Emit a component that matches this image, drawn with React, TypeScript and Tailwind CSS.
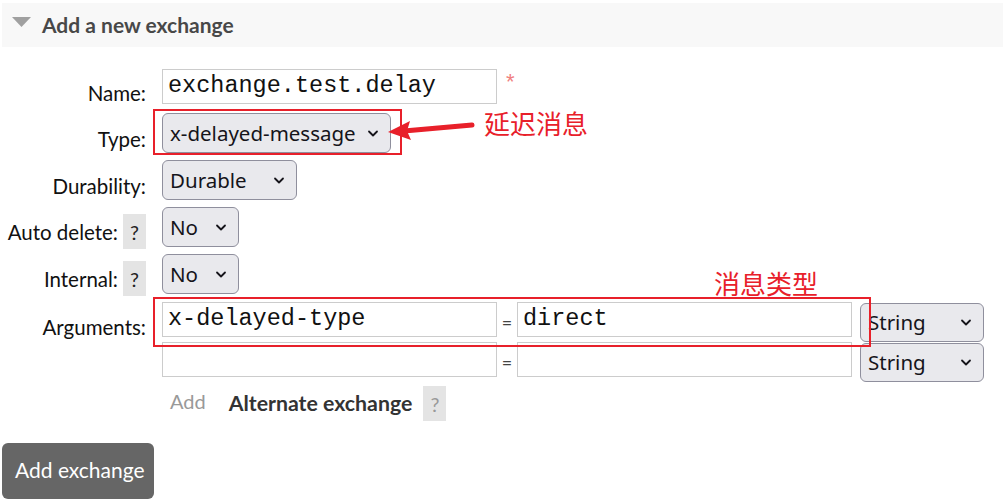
import React from "react";

const label = "font-['Lato',sans-serif] text-[20.5px] leading-[24px] text-[#111]";
const mono = "font-['Liberation_Mono',monospace] text-[23.5px] text-[#111]";
const selectFont = "font-['Noto_Sans',sans-serif] text-[20.5px] text-[#15141a]";

function Chevron() {
  return (
    <svg width="12" height="9" viewBox="0 0 12 9" className="shrink-0">
      <path d="M2 2.5 L6 6.5 L10 2.5" fill="none" stroke="#15141a" strokeWidth="1.8" strokeLinecap="round" strokeLinejoin="round" />
    </svg>
  );
}

function Select({ value, width, height = 40 }: { value: string; width: number; height?: number }) {
  return (
    <div
      className={`flex items-center justify-between bg-[#e9e9ed] border border-[#8f8f9d] rounded-[6px] pl-[7px] pr-[11px] ${selectFont}`}
      style={{ width, height }}
    >
      <span className="leading-none">{value}</span>
      <Chevron />
    </div>
  );
}

function TextInput({ value }: { value?: string }) {
  return (
    <div className={`w-[335px] h-[35px] border border-[#ccc] bg-white flex items-center pl-[5px] pb-[2px] ${mono}`}>
      {value}
    </div>
  );
}

function Help({ light }: { light?: boolean }) {
  return (
    <span
      className={`w-[23px] h-[35px] bg-[#e4e4e4] flex items-center justify-center font-['Lato',sans-serif] text-[20px] ${
        light ? "text-[#999]" : "text-[#222]"
      }`}
    >
      ?
    </span>
  );
}

function Row({
  text,
  help,
  pt,
  h,
  children,
  className = "",
}: {
  text: string;
  help?: boolean;
  pt: number;
  h: number;
  children: React.ReactNode;
  className?: string;
}) {
  return (
    <div className={`flex items-start ${className}`} style={{ height: h }}>
      <div className="w-[146px] flex justify-end items-start gap-[5px]">
        <span className={label} style={{ paddingTop: pt }}>
          {text}
        </span>
        {help && (
          <span className="pt-[7px]">
            <Help />
          </span>
        )}
      </div>
      <div className="ml-[16px] flex items-start">{children}</div>
    </div>
  );
}

export default function App() {
  return (
    <div className="relative w-[1003px] h-[499px] overflow-hidden bg-white">
      <div className="mt-[3px] ml-[2px] h-[44px] bg-[#f8f8f8] flex items-center pl-[10px]">
        <svg width="19" height="12" viewBox="0 0 19 12" className="mr-[12px] -mt-[4px]">
          <path d="M0 0 H19 L9.5 10 Z" fill="#a0a0a0" />
        </svg>
        <span className="font-['Lato',sans-serif] font-bold text-[21px] text-[#484848] -ml-[1px]">Add a new exchange</span>
      </div>

      <div className="flex flex-col">
        <Row text="Name:" pt={12} h={35} className="mt-[22px]">
          <TextInput value="exchange.test.delay" />
          <span className="ml-[9px] mt-[2px] text-[#f08080] text-[22px] leading-none font-['Liberation_Sans',sans-serif]">*</span>
        </Row>
        <Row text="Type:" pt={14} h={40} className="mt-[9px]">
          <Select value="x-delayed-message" width={229} />
        </Row>
        <Row text="Durability:" pt={14} h={40} className="mt-[7px]">
          <Select value="Durable" width={135} />
        </Row>
        <Row text="Auto delete:" help pt={13} h={40} className="mt-[7px]">
          <Select value="No" width={77} />
        </Row>
        <Row text="Internal:" help pt={13} h={40} className="mt-[7px]">
          <Select value="No" width={77} />
        </Row>
        <Row text="Arguments:" pt={13} h={75} className="mt-[8px]">
          <div className="flex flex-col gap-[5px]">
            <div className="flex items-start h-[35px]">
              <TextInput value="x-delayed-type" />
              <span className="w-[20px] text-center pt-[7px] text-[#444] font-['Lato',sans-serif] text-[18px]">=</span>
              <TextInput value="direct" />
              <div className="ml-[8px] mt-[1px]">
                <Select value="String" width={124} height={39} />
              </div>
            </div>
            <div className="flex items-start h-[35px]">
              <TextInput />
              <span className="w-[20px] text-center pt-[7px] text-[#444] font-['Lato',sans-serif] text-[18px]">=</span>
              <TextInput />
              <div className="ml-[8px] mt-[1px]">
                <Select value="String" width={124} height={39} />
              </div>
            </div>
          </div>
        </Row>
        <div className="flex items-center ml-[170px] mt-[9px] h-[35px]">
          <span className="font-['Lato',sans-serif] text-[20px] text-[#999] -mt-[6px]">Add</span>
          <span className="ml-[23px] font-['Lato',sans-serif] font-bold text-[21.3px] text-[#333]">Alternate exchange</span>
          <span className="ml-[11px]">
            <Help light />
          </span>
        </div>
        <button className="mt-[22px] ml-[2px] w-[152px] h-[56px] bg-[#666] rounded-[6px] text-white font-['Lato',sans-serif] text-[21px] text-left pl-[13px] pb-[3px]">
          Add exchange
        </button>
      </div>

      {/* annotations */}
      <div className="absolute left-[153px] top-[109px] w-[249px] h-[46px] border-2 border-[#e8202a]" />
      <div className="absolute left-[153px] top-[297px] w-[718px] h-[50px] border-2 border-[#e8202a]" />
      <svg className="absolute left-[380px] top-[110px]" width="100" height="35" viewBox="0 0 100 35">
        <path d="M92 15 L24 21" stroke="#e8202a" strokeWidth="5" strokeLinecap="round" fill="none" />
        <path d="M8 22 L30 11 L27 21 L31 30 Z" fill="#e8202a" />
      </svg>
      <span className="absolute left-[484px] top-[106px] font-['Noto_Sans_CJK_SC',sans-serif] text-[26px] leading-[34px] text-[#e8202a]">
        延迟消息
      </span>
      <span className="absolute left-[714px] top-[266px] font-['Noto_Sans_CJK_SC',sans-serif] text-[26px] leading-[34px] text-[#e8202a]">
        消息类型
      </span>
    </div>
  );
}
